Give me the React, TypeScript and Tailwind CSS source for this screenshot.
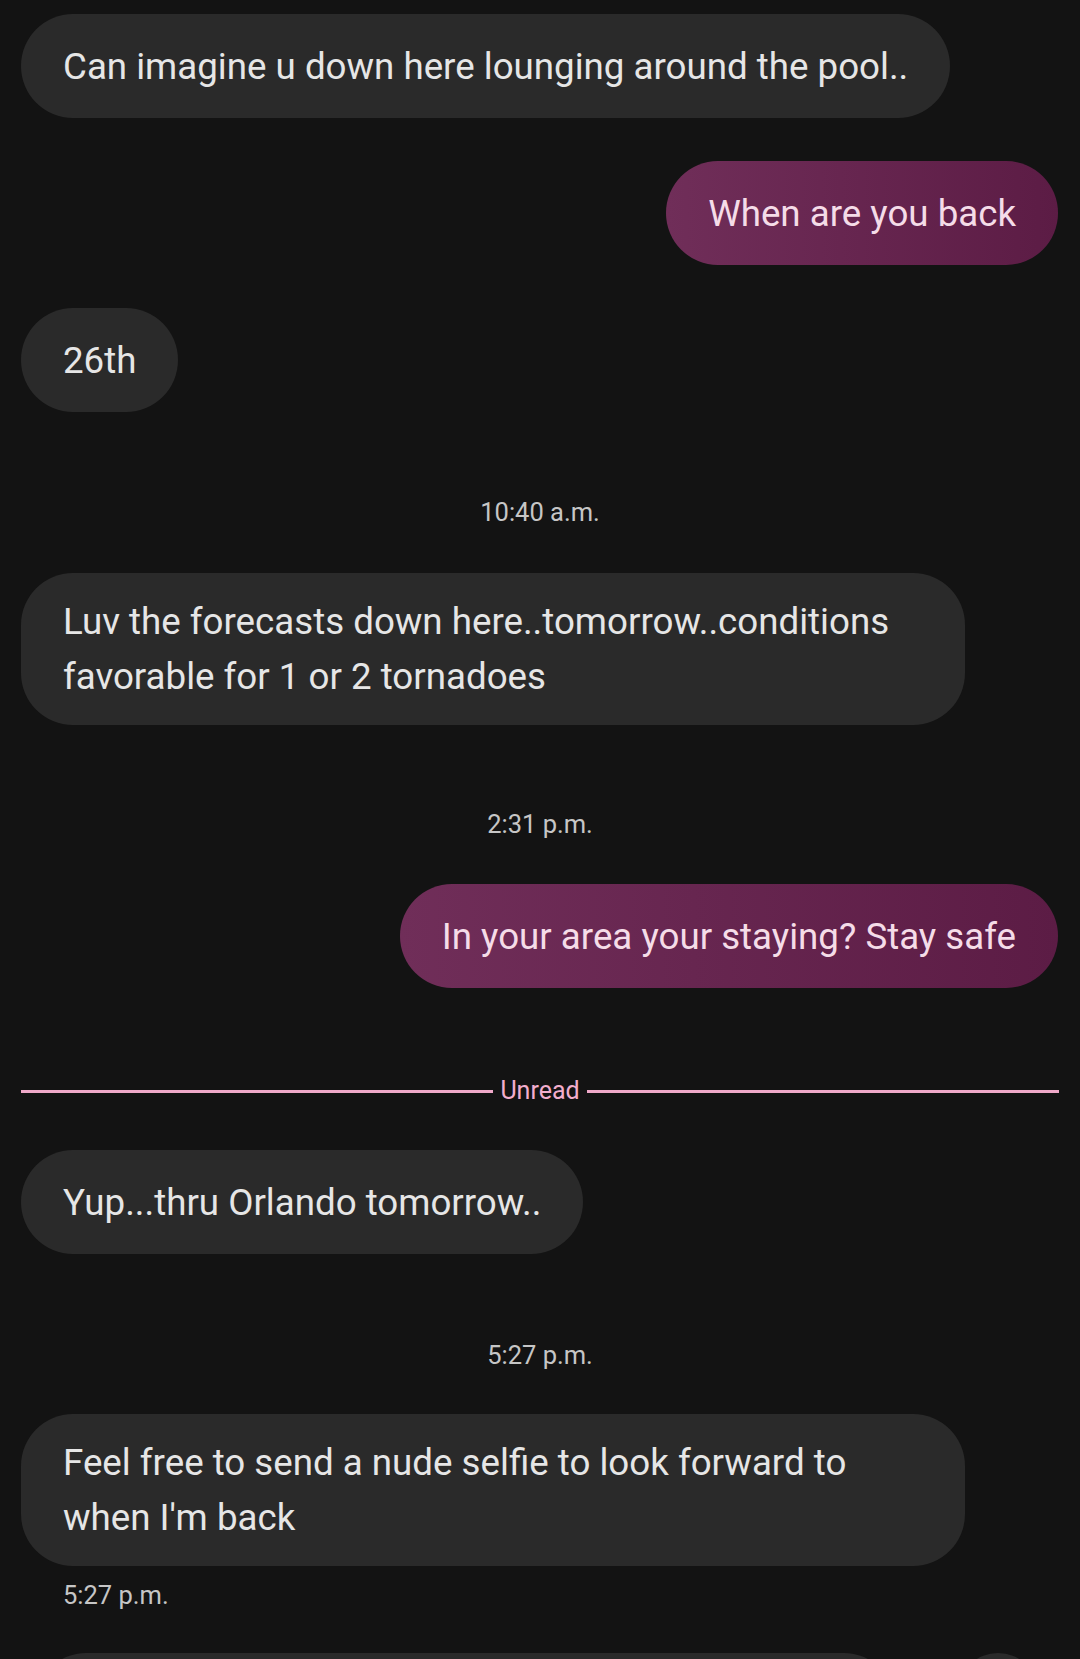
import React from 'react';

const font = { fontFamily: 'Roboto, "Noto Sans", sans-serif' };

const Received = ({ lines, wide }: { lines: string[]; wide?: boolean }) => (
  <div
    className={
      wide
        ? 'ml-[21px] w-[944px] rounded-[52px] bg-[#2a2a2a] px-[42px] py-[21px] text-[36.7px] leading-[55px] text-[#e6e6e6]'
        : 'ml-[21px] flex h-[104px] w-fit items-center whitespace-nowrap rounded-full bg-[#2a2a2a] px-[42px] text-[36.7px] leading-[55px] text-[#e6e6e6]'
    }
  >
    {lines.map((l, i) => (
      <div key={i}>{l}</div>
    ))}
  </div>
);

const Sent = ({ text }: { text: string }) => (
  <div className="mr-[22px] flex h-[104px] w-fit items-center self-end whitespace-nowrap rounded-full bg-gradient-to-r from-[#702e59] to-[#5c1c45] px-[42px] text-[36.7px] leading-[55px] text-[#f5dce8]">
    {text}
  </div>
);

const Stamp = ({ text }: { text: string }) => (
  <div className="flex h-[40px] items-center justify-center text-[25.5px] text-[#c6c6c6]">{text}</div>
);

const Unread = () => (
  <div className="mx-[21px] flex h-[40px] items-center gap-[7px]">
    <div className="h-[3px] flex-1 bg-[#efa9c9]" />
    <span className="text-[25px] text-[#f2aecd]">Unread</span>
    <div className="h-[3px] flex-1 bg-[#efa9c9]" />
  </div>
);

export default function App() {
  return (
    <div className="h-[1659px] w-[1080px] overflow-hidden bg-[#131313]" style={font}>
      <div className="flex flex-col pt-[14px]">
        <Received lines={['Can imagine u down here lounging around the pool..']} />
        <div className="h-[43px]" />
        <Sent text="When are you back" />
        <div className="h-[43px]" />
        <Received lines={['26th']} />
        <div className="h-[80px]" />
        <Stamp text="10:40 a.m." />
        <div className="h-[41px]" />
        <Received wide lines={['Luv the forecasts down here..tomorrow..conditions', 'favorable for 1 or 2 tornadoes']} />
        <div className="h-[79px]" />
        <Stamp text="2:31 p.m." />
        <div className="h-[40px]" />
        <Sent text="In your area your staying? Stay safe" />
        <div className="h-[83px]" />
        <Unread />
        <div className="h-[39px]" />
        <Received lines={['Yup...thru Orlando tomorrow..']} />
        <div className="h-[81px]" />
        <Stamp text="5:27 p.m." />
        <div className="h-[39px]" />
        <Received wide lines={['Feel free to send a nude selfie to look forward to', "when I'm back"]} />
        <div className="flex h-[56px] items-center pl-[63px] pt-[2px] text-[25.5px] text-[#c6c6c6]">5:27 p.m.</div>
        <div className="h-[31px]" />
        <div className="flex items-start justify-between pl-[36px] pr-[42px]">
          <div className="h-[100px] w-[858px] rounded-full bg-[#2a2a2a]" />
          <div className="h-[80px] w-[80px] rounded-full bg-[#2a2a2a]" />
        </div>
      </div>
    </div>
  );
}
